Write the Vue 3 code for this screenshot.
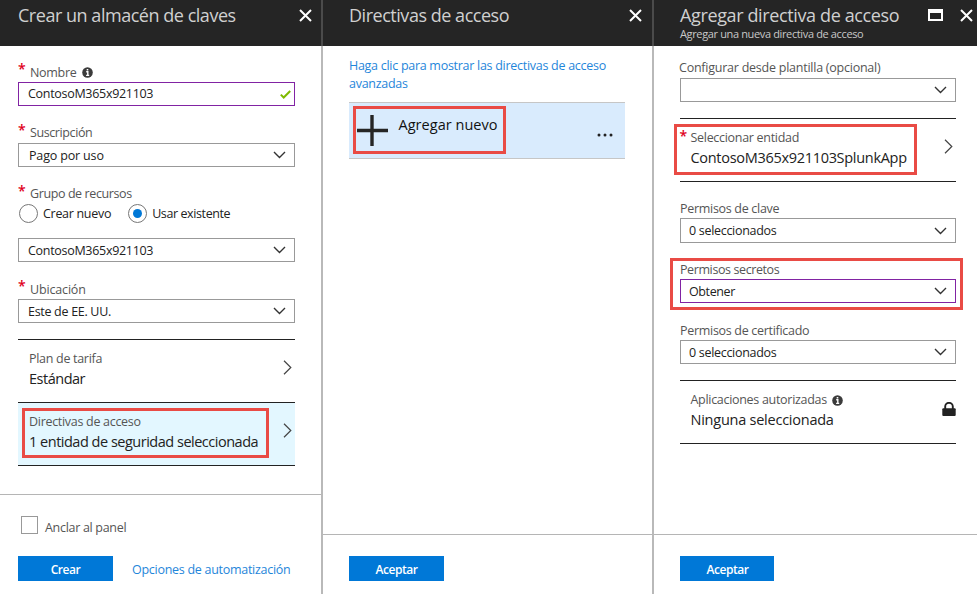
<script setup>
import { ref, h } from 'vue'

const groupMode = ref('existing')
const pinned = ref(false)

const svg = (cls, w, hgt, children) =>
  h('svg', { class: cls, width: w, height: hgt, viewBox: `0 0 ${w} ${hgt}`, fill: 'none' }, children)

const CloseIcon = () => svg('', 13, 13, [h('path', { d: 'M1 1L12 12M12 1L1 12', stroke: '#fff', 'stroke-width': 2 })])
const ChevronDown = () => svg('', 13, 8, [h('path', { d: 'M1 1L6.5 6.5L12 1', stroke: '#333', 'stroke-width': 1.4 })])
const ChevronRight = () => svg('', 9, 15, [h('path', { d: 'M1 .8L7.8 7.5L1 14.2', stroke: '#444', 'stroke-width': 1.2 })])
const InfoIcon = () =>
  svg('', 11, 11, [
    h('circle', { cx: 5.5, cy: 5.5, r: 5.3, fill: '#3b3b3b' }),
    h('path', { d: 'M4.2 4.8H5.8V8.4M4.1 8.4H7.2M4.7 2.7H6.3', stroke: '#fff', 'stroke-width': 1.4 }),
  ])
</script>

<template>
  <div class="portal">
    <section class="blade first">
      <header>
        <h1>Crear un almacén de claves</h1>
        <span class="close"><CloseIcon /></span>
      </header>
      <main>
        <div class="label low"><i class="star">*</i><span class="nombre">Nombre</span><InfoIcon class="info" /></div>
        <div class="field valid name">
          <span>ContosoM365x921103</span>
          <svg class="check" width="11" height="9" viewBox="0 0 11 9" fill="none">
            <path d="M.8 4.6L3.7 7.5L10.2 1" stroke="#7fba00" stroke-width="2" />
          </svg>
        </div>

        <div class="label gap"><i class="star">*</i><span class="tight">Suscripción</span></div>
        <div class="field"><span class="wide shift">Pago por uso</span><ChevronDown /></div>

        <div class="label gap"><i class="star">*</i><span class="tight">Grupo de recursos</span></div>
        <div class="radios">
          <label @click="groupMode = 'new'"><b :class="{ on: groupMode === 'new' }"></b><span>Crear nuevo</span></label>
          <label @click="groupMode = 'existing'"><b :class="{ on: groupMode === 'existing' }"></b><span class="tight">Usar existente</span></label>
        </div>
        <div class="field"><span>ContosoM365x921103</span><ChevronDown /></div>

        <div class="label gap low"><i class="star">*</i><span class="wide">Ubicación</span></div>
        <div class="field"><span>Este de EE. UU.</span><ChevronDown /></div>

        <div class="rows">
          <div class="row">
            <div><p>Plan de tarifa</p><strong class="snug">Estándar</strong></div>
            <ChevronRight class="go" />
          </div>
          <div class="row active">
            <div><p>Directivas de acceso</p><strong class="snug">1 entidad de seguridad seleccionada</strong></div>
            <ChevronRight class="go" />
            <div class="mark mark-policies"></div>
          </div>
        </div>
      </main>
      <footer class="tall">
        <div class="pin" @click="pinned = !pinned"><b :class="{ on: pinned }"></b><span>Anclar al panel</span></div>
        <div class="actions">
          <button class="create">Crear</button>
          <a>Opciones de automatización</a>
        </div>
      </footer>
    </section>

    <section class="blade second">
      <header>
        <h1>Directivas de acceso</h1>
        <span class="close"><CloseIcon /></span>
      </header>
      <main>
        <a class="advanced">Haga clic para mostrar las directivas de acceso avanzadas</a>
        <div class="add">
          <svg class="plus" width="31" height="31" viewBox="0 0 31 31">
            <path d="M0 15.5H31M15 0V31" stroke="#252525" stroke-width="3.4" />
          </svg>
          <span>Agregar nuevo</span>
          <svg class="dots" width="16" height="4" viewBox="0 0 16 4" fill="#222">
            <circle cx="2" cy="2" r="1.5" /><circle cx="8" cy="2" r="1.5" /><circle cx="14" cy="2" r="1.5" />
          </svg>
          <div class="mark mark-add"></div>
        </div>
      </main>
      <footer><button>Aceptar</button></footer>
    </section>

    <section class="blade third">
      <header>
        <div>
          <h1>Agregar directiva de acceso</h1>
          <h2>Agregar una nueva directiva de acceso</h2>
        </div>
        <svg class="maximize" width="15" height="12" viewBox="0 0 15 12">
          <path d="M0 0H15V12H0ZM2 4V10H13V4Z" fill="#fff" fill-rule="evenodd" />
        </svg>
        <span class="close"><CloseIcon /></span>
      </header>
      <main>
        <div class="label template"><span class="wide2">Configurar desde plantilla (opcional)</span></div>
        <div class="field"><span></span><ChevronDown /></div>

        <div class="rows principal">
          <div class="row">
            <i class="star">*</i>
            <div><p>Seleccionar entidad</p><strong>ContosoM365x921103SplunkApp</strong></div>
            <ChevronRight class="go" />
            <div class="mark mark-principal"></div>
          </div>
        </div>

        <div class="label key low"><span>Permisos de clave</span></div>
        <div class="field keyfield"><span>0 seleccionados</span><ChevronDown /></div>

        <div class="secret">
          <div class="label gap low"><span class="tight">Permisos secretos</span></div>
          <div class="field valid"><span class="tight">Obtener</span><ChevronDown /></div>
          <div class="mark mark-secret"></div>
        </div>

        <div class="label gap low"><span>Permisos de certificado</span></div>
        <div class="field"><span>0 seleccionados</span><ChevronDown /></div>

        <div class="rows">
          <div class="row apps">
            <div>
              <p>Aplicaciones autorizadas<InfoIcon class="info" /></p>
              <strong class="loose">Ninguna seleccionada</strong>
            </div>
            <svg class="lock" width="14" height="14" viewBox="0 0 14 14">
              <path d="M3.2 7V4.6a3.8 3.8 0 0 1 7.6 0V7" fill="none" stroke="#222" stroke-width="1.9" />
              <rect x="0.3" y="6.3" width="13.4" height="7.7" rx="1" fill="#222" />
            </svg>
          </div>
        </div>
      </main>
      <footer><button>Aceptar</button></footer>
    </section>
  </div>
</template>

<style>
body { margin: 0; overflow: hidden; }
</style>

<style scoped>
.portal {
  display: flex;
  width: 977px;
  height: 594px;
  overflow: hidden;
  background: #fff;
  color: #222;
  font: 12.5px/20px "Open Sans", "Noto Sans", sans-serif;
  letter-spacing: -0.3px;
}
.portal * { box-sizing: border-box; }
.blade { display: flex; flex-direction: column; flex: none; height: 594px; }
.first { width: 321px; }
.second { width: 331px; }
.third { width: 325px; }
.second, .third { border-left: 2px solid #b9b9b9; }

header {
  display: flex;
  align-items: flex-start;
  height: 46px;
  padding: 4px 9px 0 18px;
  background: #252525;
  flex: none;
}
.second header, .third header { margin-left: -2px; padding-left: 26px; border-left: 2px solid #4b4b4b; }
.second header { padding-right: 10px; }
.third header { padding-right: 4px; }
h1 { margin: 0; color: #d0d0d0; font-size: 18px; font-weight: 400; line-height: 22px; letter-spacing: -0.47px; white-space: nowrap; }
.third h1 { letter-spacing: -0.37px; }
h2 { margin: 2px 0 0; color: #c8c8c8; font-size: 11px; font-weight: 400; line-height: 12px; letter-spacing: -0.36px; white-space: nowrap; }
.close { margin: 5px 0 0 auto; line-height: 0; }
.maximize { margin: 5px 0 0 29px; }

main { flex: 1; padding: 16px 26px 0 18px; min-height: 0; }
.second main { padding: 11px 27px 0 26px; }
.third main { padding: 12px 21px 0 26px; }

.label { display: flex; align-items: center; height: 20px; color: #555; white-space: nowrap; }
.label.gap { height: 21px; margin-top: 16px; }
.label.low { padding-top: 2px; }
.template { margin-left: -1px; }
.star { width: 12px; height: 20px; color: #e0001b; font-size: 14px; font-style: normal; font-weight: 600; line-height: 14px; flex: none; }
.low .star { height: 22px; }
.first .info { margin: -1px 0 0 6px; }
.info { margin-left: 5px; flex: none; }
.tight { letter-spacing: -0.4px; }
.wide { letter-spacing: -0.16px; }
.wide2 { letter-spacing: -0.24px; }

.field {
  display: flex;
  align-items: center;
  justify-content: space-between;
  height: 24px;
  padding: 0 8px 0 9px;
  border: 1px solid #999;
  white-space: nowrap;
}
.field span { padding-top: 2px; }
.field span.shift { padding-left: 1px; }
.first .name span, .keyfield span { padding-top: 0; }
.third .field { padding-left: 8px; }
.field.valid { border-color: #8123a3; }
.check { margin-right: -5px; }

.radios { display: flex; gap: 17px; height: 20px; margin: -1px 0 15px 1px; align-items: center; }
.radios label { display: flex; align-items: center; gap: 5px; }
.radios label > span { padding-top: 2px; }
.radios b { display: grid; place-items: center; width: 19px; height: 19px; border: 1px solid #777; border-radius: 50%; }
.radios b.on::after { content: ''; width: 9px; height: 9px; border-radius: 50%; background: #0078d7; }

.rows { margin-top: 16px; border-bottom: 1px solid #222; }
.row { position: relative; display: flex; height: 63px; padding: 9px 3px 0 11px; border-top: 1px solid #222; white-space: nowrap; }
.row.active { background: #e3f7ff; }
.third .row { padding-left: 10.5px; }
.row p { display: flex; align-items: center; margin: 0; color: #555; line-height: 20px; }
.row strong { display: block; font-size: 14.5px; font-weight: 400; line-height: 20px; letter-spacing: -0.3px; }
.row strong.snug { letter-spacing: -0.49px; }
.row strong.loose { letter-spacing: -0.24px; }
.go { margin: 11px 0 0 auto; flex: none; }
.principal .star { width: 11px; margin: 1px 0 0 -11px; }
.lock { margin: 12px -3px 0 auto; }

.mark { position: absolute; border: 3px solid #e94b45; pointer-events: none; }
.mark-policies { left: 4px; top: 5px; width: 247px; height: 50px; }
.mark-add { left: 4px; top: 3px; width: 153px; height: 48px; }
.mark-principal { left: -6px; top: 5px; width: 243px; height: 51px; }
.mark-secret { left: -10px; top: 15px; width: 293px; height: 52px; }

footer { display: flex; align-items: flex-start; height: 60px; padding: 21px 0 0 26px; border-top: 1px solid #b5b5b5; flex: none; }
footer.tall { flex-direction: column; height: 100px; padding: 21px 0 0 18px; }
.pin { display: flex; gap: 7px; height: 40px; margin-left: 3px; color: #555; }
.pin b { width: 17px; height: 18px; border: 1px solid #999; }
.pin b.on { background: #0078d7; }
.pin span { margin-top: 2px; }
.actions { display: flex; align-items: center; gap: 19px; }
button { width: 95px; height: 25px; padding: 2px 0 0; border: 0; background: #0078d7; color: #fff; font: 600 12px/23px "Open Sans", sans-serif; letter-spacing: -0.45px; }
.third button { width: 94px; padding-left: 1px; }
a { color: #1f86da; }
.actions a { padding-top: 2px; letter-spacing: -0.28px; }
.advanced { display: block; line-height: 18px; letter-spacing: -0.28px; }

.add { position: relative; display: flex; height: 57px; margin-top: 9px; padding: 12px 12px 0 8px; border-top: 1px solid #c6c6c6; border-bottom: 1px solid #c6c6c6; background: #d9ebfd; }
.add span { margin: 0 0 0 10.5px; font-size: 14.5px; letter-spacing: 0.03px; color: #111; }
.dots { margin: 18px 0 0 auto; }

.key { height: 21px; margin-top: 15px; }
.keyfield { height: 25px; }
.secret { position: relative; display: flow-root; }
.secret .label { margin-top: 15px; }
</style>
